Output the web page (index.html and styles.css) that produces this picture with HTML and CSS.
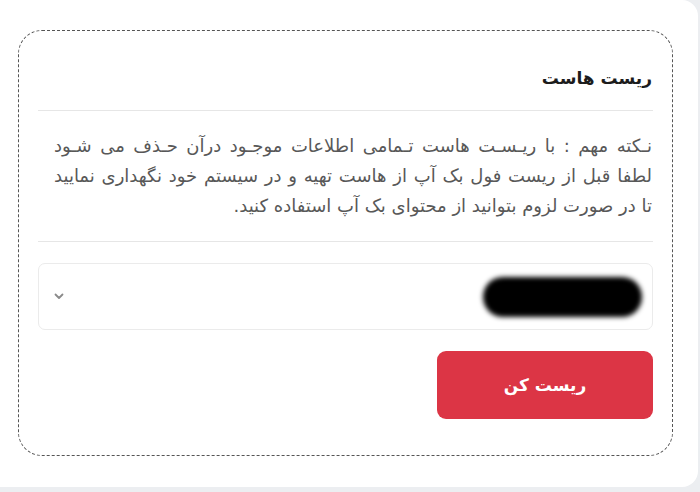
FILE: index.html
```html
<!DOCTYPE html>
<html lang="fa" dir="rtl">
<head>
<meta charset="utf-8">
<title>ریست هاست</title>
<link rel="stylesheet" href="styles.css">
</head>
<body>
<div class="panel">
  <section class="card">
    <header class="card-head">
      <h2 class="card-title">ریست هاست</h2>
    </header>
    <div class="card-body">
      <p class="note">
        <span class="line line-just">نـکته مهم : با ریـسـت هاست تـمامی اطلاعات موجـود درآن حـذف می شـود</span>
        <span class="line line-just">لطفا قبل از ریست فول بک آپ از هاست تهیه و در سیستم خود نگهداری نمایید</span>
        <span class="line">تا در صورت لزوم بتوانید از محتوای بک آپ استفاده کنید.</span>
      </p>
    </div>
    <div class="select">
      <span class="select-value"></span>
      <svg class="chevron" width="10" height="7" viewBox="0 0 10 7"><path d="M1.5 1.5 L5 5 L8.5 1.5" fill="none" stroke="#8a8a8a" stroke-width="1.8" stroke-linecap="round" stroke-linejoin="round"/></svg>
    </div>
    <div class="actions">
      <button class="btn-reset" type="button">ریست کن</button>
    </div>
  </section>
</div>
</body>
</html>
```
FILE: styles.css
```css
html, body {
  margin: 0;
  padding: 0;
}
body {
  background: #eceef1;
  width: 700px;
  height: 492px;
  overflow: hidden;
  font-family: "DejaVu Sans", sans-serif;
}
.panel {
  width: 698px;
  height: 487px;
  margin-left: 0;
  margin-right: 2px;
  background: #ffffff;
  border-radius: 0 16px 16px 0;
  padding-top: 30px;
  box-sizing: border-box;
  direction: ltr;
}
.card {
  direction: rtl;
  margin-left: 18px;
  width: 655px;
  height: 426px;
  box-sizing: border-box;
  border: 1px dashed #555;
  border-radius: 24px;
  padding: 0 19px;
}
.card-head {
  padding: 33px 0 18px;
  border-bottom: 1px solid #e6e6e6;
}
.card-title {
  margin: 0;
  font-size: 17px;
  line-height: 28px;
  font-weight: 700;
  color: #1c1c1c;
  padding-right: 1px;
}
.card-body {
  padding: 20px 0;
  border-bottom: 1px solid #e6e6e6;
}
.note {
  margin: 0;
  padding: 0 1px 0 16px;
  font-size: 18px;
  line-height: 30px;
  color: #585858;
}
.line {
  display: block;
  white-space: nowrap;
}
.line-just {
  text-align: justify;
  text-align-last: justify;
}
.select {
  margin-top: 21px;
  height: 67px;
  box-sizing: border-box;
  border: 1px solid #ebebeb;
  border-radius: 7px;
  display: flex;
  align-items: center;
  justify-content: space-between;
  padding: 0 10px 0 15px;
}
.select-value {
  width: 159px;
  height: 40px;
  background: #000;
  border-radius: 20px;
  filter: blur(2.5px);
}
.chevron {
  display: block;
}
.actions {
  margin-top: 21px;
  display: flex;
}
.btn-reset {
  width: 216px;
  height: 68px;
  border: 0;
  border-radius: 9px;
  background: #dc3545;
  color: #fff;
  font-family: inherit;
  font-size: 17px;
  font-weight: 700;
}
```
